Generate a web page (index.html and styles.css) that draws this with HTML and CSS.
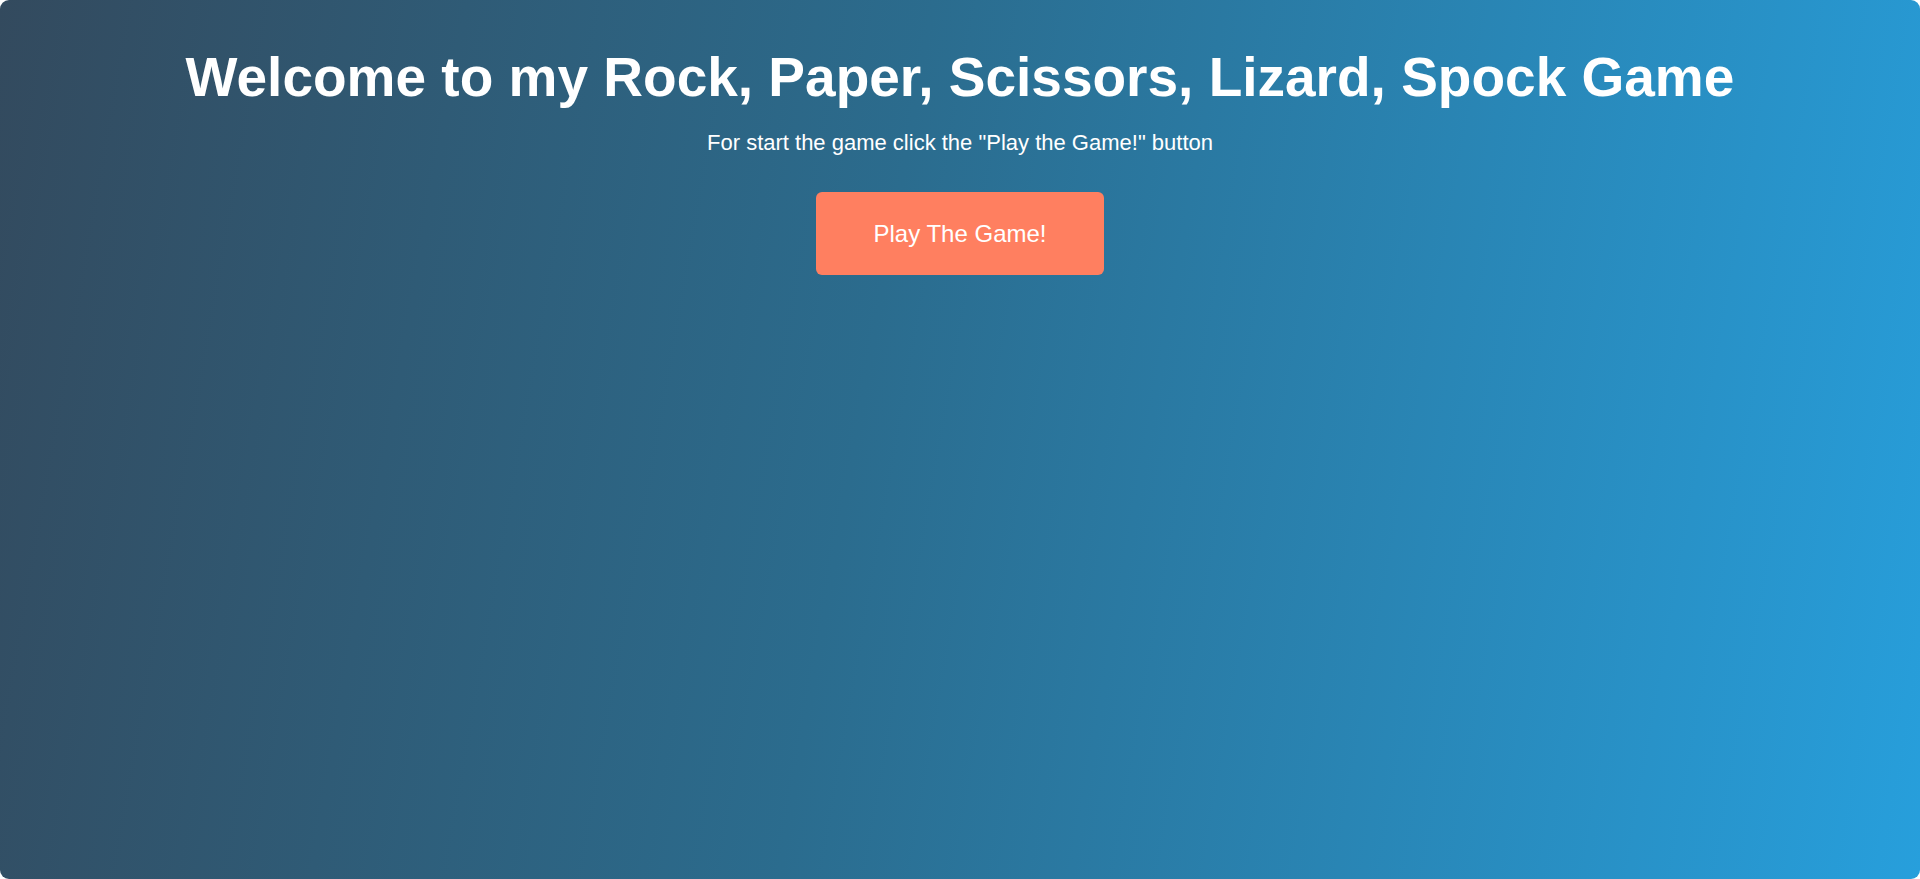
FILE: index.html
```html
<!DOCTYPE html>
<html lang="en">
<head>
<meta charset="utf-8">
<title>Rock, Paper, Scissors, Lizard, Spock</title>
<link rel="stylesheet" href="styles.css">
</head>
<body>
<main class="page">
  <h1 class="title">Welcome to my Rock, Paper, Scissors, Lizard, Spock Game</h1>
  <p class="subtitle">For start the game click the "Play the Game!" button</p>
  <button class="play-btn" type="button">Play The Game!</button>
</main>
</body>
</html>
```
FILE: styles.css
```css
html {
  background: #ffffff;
  height: 100%;
}
body {
  margin: 0;
  min-height: 100%;
  height: 100%;
  font-family: "Liberation Sans", Arial, sans-serif;
  color: #ffffff;
}
.page {
  box-sizing: border-box;
  height: 100%;
  border-radius: 9px;
  background: linear-gradient(100deg, #334a5e 0%, #2b6c8e 45%, #279fdc 100%);
  display: flex;
  flex-direction: column;
  align-items: center;
  padding-top: 46px;
}
.title {
  margin: 0;
  font-size: 55px;
  font-weight: bold;
  line-height: 63px;
  text-align: center;
}
.subtitle {
  margin: 21px 0 0;
  font-size: 22px;
  line-height: 25px;
}
.play-btn {
  margin-top: 37px;
  width: 288px;
  height: 83px;
  border: none;
  border-radius: 6px;
  background: #ff7f60;
  color: #ffffff;
  font-family: "Liberation Sans", Arial, sans-serif;
  font-size: 24px;
  cursor: pointer;
}
```
